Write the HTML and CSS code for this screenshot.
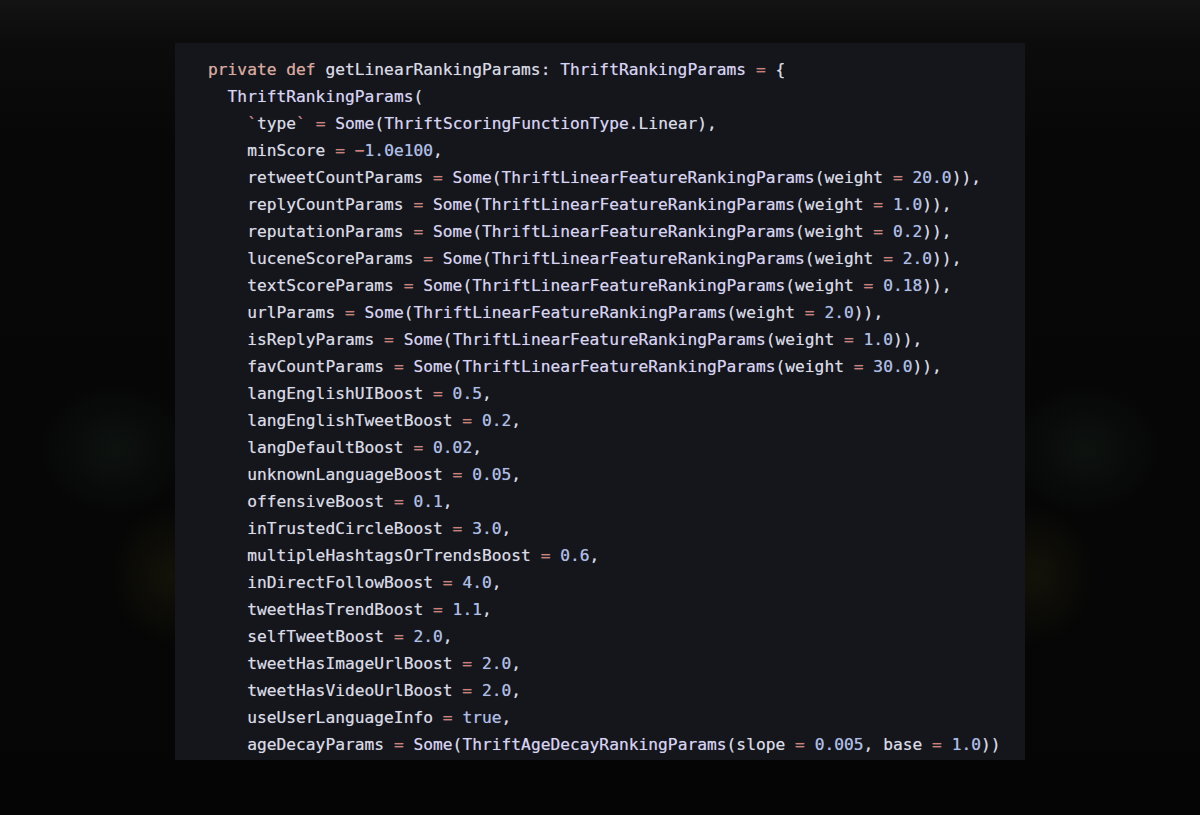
FILE: index.html
```html
<!DOCTYPE html>
<html lang="en">
<head>
<meta charset="utf-8">
<title>getLinearRankingParams</title>
<link rel="stylesheet" href="styles.css">
</head>
<body>
<main class="stage">
<div class="code">
<div class="line"><span class="kw">private def</span> getLinearRankingParams: <span class="ty">ThriftRankingParams</span> <span class="op">=</span> {</div>
<div class="line i1"><span class="ty">ThriftRankingParams</span>(</div>
<div class="line i2"><span class="op">`</span>type<span class="op">`</span> <span class="op">=</span> <span class="ty">Some</span>(<span class="ty">ThriftScoringFunctionType</span>.Linear),</div>
<div class="line i2">minScore <span class="op">=</span> <span class="op">−</span><span class="num">1.0e100</span>,</div>
<div class="line i2">retweetCountParams <span class="op">=</span> <span class="ty">Some</span>(<span class="ty">ThriftLinearFeatureRankingParams</span>(weight <span class="op">=</span> <span class="num">20.0</span>)),</div>
<div class="line i2">replyCountParams <span class="op">=</span> <span class="ty">Some</span>(<span class="ty">ThriftLinearFeatureRankingParams</span>(weight <span class="op">=</span> <span class="num">1.0</span>)),</div>
<div class="line i2">reputationParams <span class="op">=</span> <span class="ty">Some</span>(<span class="ty">ThriftLinearFeatureRankingParams</span>(weight <span class="op">=</span> <span class="num">0.2</span>)),</div>
<div class="line i2">luceneScoreParams <span class="op">=</span> <span class="ty">Some</span>(<span class="ty">ThriftLinearFeatureRankingParams</span>(weight <span class="op">=</span> <span class="num">2.0</span>)),</div>
<div class="line i2">textScoreParams <span class="op">=</span> <span class="ty">Some</span>(<span class="ty">ThriftLinearFeatureRankingParams</span>(weight <span class="op">=</span> <span class="num">0.18</span>)),</div>
<div class="line i2">urlParams <span class="op">=</span> <span class="ty">Some</span>(<span class="ty">ThriftLinearFeatureRankingParams</span>(weight <span class="op">=</span> <span class="num">2.0</span>)),</div>
<div class="line i2">isReplyParams <span class="op">=</span> <span class="ty">Some</span>(<span class="ty">ThriftLinearFeatureRankingParams</span>(weight <span class="op">=</span> <span class="num">1.0</span>)),</div>
<div class="line i2">favCountParams <span class="op">=</span> <span class="ty">Some</span>(<span class="ty">ThriftLinearFeatureRankingParams</span>(weight <span class="op">=</span> <span class="num">30.0</span>)),</div>
<div class="line i2">langEnglishUIBoost <span class="op">=</span> <span class="num">0.5</span>,</div>
<div class="line i2">langEnglishTweetBoost <span class="op">=</span> <span class="num">0.2</span>,</div>
<div class="line i2">langDefaultBoost <span class="op">=</span> <span class="num">0.02</span>,</div>
<div class="line i2">unknownLanguageBoost <span class="op">=</span> <span class="num">0.05</span>,</div>
<div class="line i2">offensiveBoost <span class="op">=</span> <span class="num">0.1</span>,</div>
<div class="line i2">inTrustedCircleBoost <span class="op">=</span> <span class="num">3.0</span>,</div>
<div class="line i2">multipleHashtagsOrTrendsBoost <span class="op">=</span> <span class="num">0.6</span>,</div>
<div class="line i2">inDirectFollowBoost <span class="op">=</span> <span class="num">4.0</span>,</div>
<div class="line i2">tweetHasTrendBoost <span class="op">=</span> <span class="num">1.1</span>,</div>
<div class="line i2">selfTweetBoost <span class="op">=</span> <span class="num">2.0</span>,</div>
<div class="line i2">tweetHasImageUrlBoost <span class="op">=</span> <span class="num">2.0</span>,</div>
<div class="line i2">tweetHasVideoUrlBoost <span class="op">=</span> <span class="num">2.0</span>,</div>
<div class="line i2">useUserLanguageInfo <span class="op">=</span> <span class="num">true</span>,</div>
<div class="line i2">ageDecayParams <span class="op">=</span> <span class="ty">Some</span>(<span class="ty">ThriftAgeDecayRankingParams</span>(slope <span class="op">=</span> <span class="num">0.005</span>, base <span class="op">=</span> <span class="num">1.0</span>))</div>
</div>
</main>
</body>
</html>
```

FILE: styles.css
```css
html, body {
  margin: 0;
  padding: 0;
  height: 100%;
}

body {
  background-color: #060606;
  background-image:
    radial-gradient(ellipse 75px 65px at 115px 450px, rgba(26, 40, 32, 0.35), rgba(26, 40, 32, 0) 100%),
    radial-gradient(ellipse 60px 70px at 170px 575px, rgba(40, 38, 14, 0.4), rgba(40, 38, 14, 0) 100%),
    radial-gradient(ellipse 75px 65px at 1085px 450px, rgba(26, 40, 32, 0.35), rgba(26, 40, 32, 0) 100%),
    radial-gradient(ellipse 60px 70px at 1035px 575px, rgba(40, 38, 14, 0.4), rgba(40, 38, 14, 0) 100%),
    linear-gradient(to bottom, #131313 0px, #0c0c0c 40px, #070707 140px, #050505 100%);
  overflow: hidden;
}

.stage {
  display: flex;
  padding-top: 43px;
  padding-left: 175px;
}

.code {
  box-sizing: border-box;
  width: 850px;
  height: 717px;
  padding: 13px 0 0 33px;
  background: #15161b;
  color: #d8dbe5;
  font-family: "DejaVu Sans Mono", "Liberation Mono", monospace;
  font-size: 16.25px;
  line-height: 27px;
  overflow: hidden;
  text-shadow: 0 0 0.7px rgba(216, 219, 229, 0.55);
}

.line {
  white-space: pre;
  height: 27px;
}

.i1 {
  padding-left: 2ch;
}

.i2 {
  padding-left: 4ch;
}

.kw {
  color: #dba799;
}

.ty {
  color: #d6d3f4;
}

.op {
  color: #cf7f78;
}

.num {
  color: #abbfea;
}
```
